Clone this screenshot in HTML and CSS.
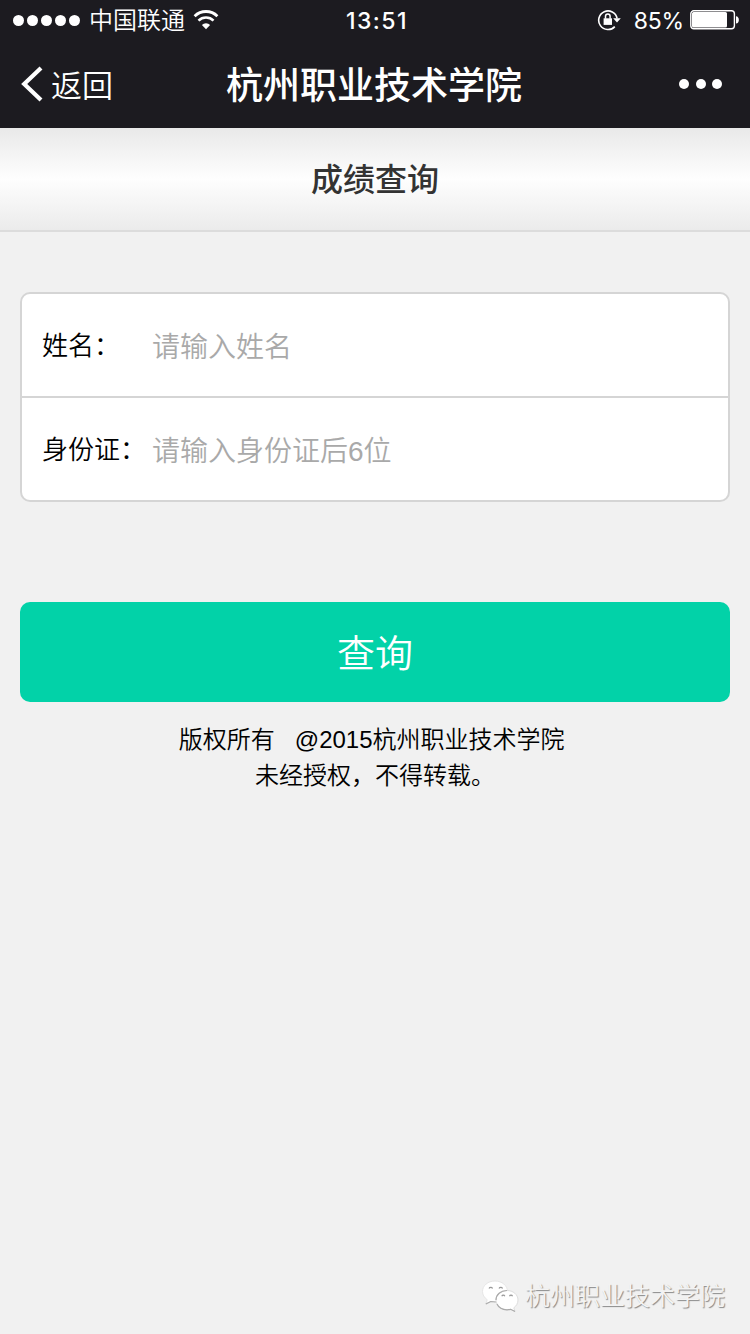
FILE: index.html
```html
<!DOCTYPE html>
<html lang="zh-CN">
<head>
    <meta charset="UTF-8">
    <meta name="viewport" content="width=device-width, initial-scale=1.0">
    <title>成绩查询</title>
    <link rel="stylesheet" href="styles.css">
</head>
<body>
    <div class="topbar">
        <div class="status">
            <div class="status-left">
                <div class="signal"><i></i><i></i><i></i><i></i><i></i></div>
                <span class="carrier">中国联通</span>
                <svg class="wifi" width="26" height="20" viewBox="0 0 26 20">
                    <path d="M1.6 6.2a16.2 16.2 0 0 1 22.8 0" fill="none" stroke="#fff" stroke-width="2.8"/>
                    <path d="M5.5 10.6a10.6 10.6 0 0 1 15 0" fill="none" stroke="#fff" stroke-width="2.6"/>
                    <path d="M13 19.3l-4.1-4.4a5.8 5.8 0 0 1 8.2 0z" fill="#fff"/>
                </svg>
            </div>
            <span class="clock">13:51</span>
            <div class="status-right">
                <svg class="rotation-lock" width="24" height="22" viewBox="0 0 24 22">
                    <path d="M17.8 17.6A9.3 9.3 0 1 1 20.1 9.3" fill="none" stroke="#fff" stroke-width="1.6"/>
                    <path d="M16.2 9.300h7.600l-3.800 4.200z" fill="#fff"/>
                    <path d="M6.600 9.300h8.400v6.600H6.600z" fill="#fff"/>
                    <path d="M8.500 9.800V7.300a2.300 2.300 0 0 1 4.600 0v2.500" fill="none" stroke="#fff" stroke-width="1.5"/>
                </svg>
                <span class="percent">85%</span>
                <svg class="battery" width="50" height="20" viewBox="0 0 50 20">
                    <rect x="0.8" y="0.8" width="43.6" height="18" rx="3" fill="none" stroke="#fff" stroke-width="1.4"/>
                    <rect x="2" y="2" width="35" height="15.6" rx="1.5" fill="#fff"/>
                    <path d="M46 6.2c3.8 0 3.8 7.4 0 7.4z" fill="#fff"/>
                </svg>
            </div>
        </div>
        <div class="nav">
            <a class="back">
                <svg width="22" height="36" viewBox="0 0 22 36">
                    <path d="M20 2L3.2 18 20 34" fill="none" stroke="#fff" stroke-width="4.2"/>
                </svg>
                <span>返回</span>
            </a>
            <h1 class="nav-title">杭州职业技术学院</h1>
            <div class="more"><i></i><i></i><i></i></div>
        </div>
    </div>

    <h2 class="page-title">成绩查询</h2>

    <form class="query">
        <div class="fields">
            <label class="field">
                <span class="label">姓名：</span>
                <input class="input" type="text" placeholder="请输入姓名" autocomplete="off">
            </label>
            <label class="field">
                <span class="label">身份证：</span>
                <input class="input" type="text" placeholder="请输入身份证后6位" autocomplete="off">
            </label>
        </div>
        <button class="submit" type="button">查询</button>
    </form>

    <div class="copyright">
        <p>版权所有&nbsp;&nbsp;&nbsp;@2015杭州职业技术学院&nbsp;</p>
        <p>未经授权，不得转载。</p>
    </div>

    <div class="watermark">
        <svg width="38" height="34" viewBox="0 0 38 34">
            <g fill="#fff">
                <path d="M14 2C6.8 2 1.5 6.6 1.5 12.5c0 3.300 1.800 6.200 4.700 8.200L4.800 25l5-2.500c1.400.4 2.800.5 4.200.5 7 0 12.500-4.600 12.500-10.500S21 2 14 2z" stroke="#e6e6e6"/>
                <path d="M26 11.500c-6.300 0-11 4-11 9.500s4.700 9.800 11 9.800c1.300 0 2.500-.2 3.700-.5l4.300 2.200-1.200-3.700c2.600-1.800 4.200-4.600 4.200-7.800 0-5.400-4.900-9.500-11-9.500z" stroke="#ddd"/>
            </g>
            <g fill="none" stroke="#999" stroke-width="1.2">
                <path d="M8 9.500a2 2 0 0 1 3.600 0M18 9.500a2 2 0 0 1 3.600 0M20.800 17.200a1.600 1.600 0 0 1 3 0M28.500 17.200a1.600 1.600 0 0 1 3 0"/>
                <path d="M15 21c0-5.500 4.700-9.500 11-9.500M4.800 25l5-2.500 5 .5M16 25c1.700 3.600 5.500 5.800 10 5.800 1.300 0 2.500-.2 3.700-.5l4.300 2.200" stroke="#aaa"/>
            </g>
        </svg>
        <span>杭州职业技术学院</span>
    </div>
</body>
</html>
```

FILE: styles.css
```css
:root {
    --bar: #1c1b20;
    --bg: #f1f1f1;
    --line: #d5d5d5;
    --primary: #02d2a8;
    --placeholder: #a9a9a9;
}

* {
    margin: 0;
    padding: 0;
    box-sizing: border-box;
}

body {
    min-height: 1334px;
    display: flex;
    flex-direction: column;
    background: var(--bg);
    color: #000;
    font-family: "Liberation Sans", "Noto Sans CJK SC", sans-serif;
    font-weight: 350;
}

.topbar {
    height: 128px;
    background: var(--bar);
    color: #fff;
}

.status {
    height: 40px;
    display: grid;
    grid-template-columns: 1fr auto 1fr;
    align-items: center;
    padding: 0 10px 0 13px;
    font-family: Inter, "Noto Sans CJK SC", sans-serif;
    font-size: 24px;
    line-height: 36px;
}

.status-left,
.status-right {
    display: flex;
    align-items: center;
}

.status-right {
    justify-content: flex-end;
}

.signal {
    display: flex;
    gap: 3px;
    margin-right: 9px;
}

.signal i {
    width: 11px;
    height: 11px;
    border-radius: 50%;
    background: #fff;
}

.carrier {
    padding-top: 2px;
}

.wifi {
    margin-left: 8px;
}

.clock {
    padding: 1px 0 0 1px;
    font-size: 23px;
    font-weight: 500;
    letter-spacing: 1.5px;
}

.rotation-lock {
    margin-right: 13px;
}

.percent {
    padding-top: 2px;
    margin-right: 6px;
    font-size: 23px;
    font-weight: 400;
    letter-spacing: -0.2px;
}

.nav {
    height: 88px;
    display: grid;
    grid-template-columns: 1fr auto 1fr;
    align-items: center;
    padding: 0 28px 0 21px;
}

.back {
    display: flex;
    align-items: center;
    gap: 8px;
    font-size: 31px;
}

.back span {
    padding-bottom: 2px;
}

.nav-title {
    padding: 0 0 3px 5px;
    font-size: 37px;
    font-weight: 500;
}

.more {
    display: flex;
    justify-content: flex-end;
    gap: 6.5px;
}

.more i {
    width: 10px;
    height: 10px;
    border-radius: 50%;
    background: #fff;
}

.page-title {
    height: 104px;
    border-bottom: 2px solid #dcdcdc;
    background: linear-gradient(#e9e9e9, #fefefe 50%, #ebebeb);
    color: #333;
    font-size: 32px;
    font-weight: 500;
    line-height: 104px;
    text-align: center;
}

.query {
    padding: 60px 20px 0;
}

.fields {
    border: 2px solid var(--line);
    border-radius: 10px;
    background: #fff;
    overflow: hidden;
}

.field {
    height: 102px;
    display: flex;
    align-items: center;
    padding: 0 20px;
}

.field + .field {
    height: 104px;
    border-top: 2px solid var(--line);
}

.label {
    width: 110px;
    padding-bottom: 4px;
    font-size: 26px;
    white-space: nowrap;
}

.input {
    flex: 1;
    height: 60px;
    padding-top: 5px;
    border: none;
    outline: none;
    background: none;
    font: inherit;
    font-size: 28px;
}

.input::placeholder {
    color: var(--placeholder);
}

.submit {
    display: block;
    width: 100%;
    height: 100px;
    margin-top: 100px;
    padding-bottom: 3px;
    border: none;
    border-radius: 10px;
    background: var(--primary);
    color: #fff;
    font: inherit;
    font-size: 38px;
}

.copyright {
    margin-top: 20px;
    font-size: 24px;
    line-height: 36px;
    text-align: center;
}

.watermark {
    display: flex;
    justify-content: flex-end;
    align-items: center;
    gap: 6px;
    margin-top: auto;
    padding: 0 25px 18px 0;
    color: #f3f3f3;
    font-size: 25px;
    text-shadow: 1px 1px 1px #888;
}

.watermark span {
    padding-bottom: 4px;
}
```
